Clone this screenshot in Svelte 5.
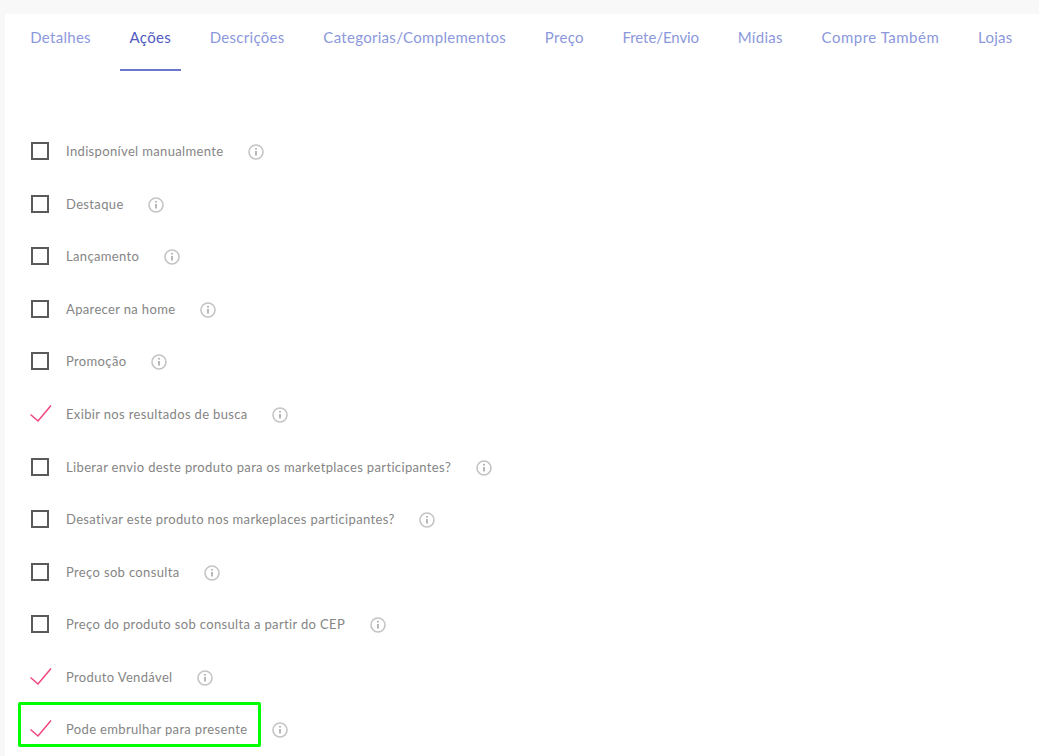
<script>
  const tabs = [
    { name: 'Detalhes' }, { name: 'Ações', active: true }, { name: 'Descrições' },
    { name: 'Categorias/Complementos' }, { name: 'Preço' }, { name: 'Frete/Envio', tight: true },
    { name: 'Mídias' }, { name: 'Compre Também', wide: true }, { name: 'Lojas' }
  ];
  const rows = [
    ['Indisponível manualmente',false],['Destaque',false],['Lançamento',false],['Aparecer na home',false],['Promoção',false],
    ['Exibir nos resultados de busca',true],['Liberar envio deste produto para os marketplaces participantes?',false],
    ['Desativar este produto nos markeplaces participantes?',false],['Preço sob consulta',false],
    ['Preço do produto sob consulta a partir do CEP',false],['Produto Vendável',true],['Pode embrulhar para presente',true]
  ];
</script>

<div class="page">
  <div class="card">
    <nav class="tabs">
      {#each tabs as t}
        <span class="tab" class:active={t.active} class:tight={t.tight} class:wide={t.wide}>{t.name}</span>
      {/each}
    </nav>
    <div class="list">
      {#each rows as [label, checked], i}
        <div class="row">
          <span class="box">
            {#if checked}
              <svg class="check" width="24" height="20" viewBox="0 0 24 20"><path d="M1.5 10.5 L9 17 L22 1.5" fill="none" stroke="#f0457f" stroke-width="1.5"/></svg>
            {:else}
              <span class="square"></span>
            {/if}
          </span>
          <span class="label">{label}</span>
          <svg class="info" width="16" height="16" viewBox="0 0 16 16">
            <circle cx="8" cy="8" r="7" fill="none" stroke="#c4c4c4" stroke-width="1.6"/>
            <circle cx="8" cy="4.8" r="1" fill="#b0b0b0"/>
            <path d="M8 7v4.6" stroke="#b0b0b0" stroke-width="1.8"/>
          </svg>
          {#if i === 11}<span class="mark"></span>{/if}
        </div>
      {/each}
    </div>
  </div>
</div>

<style>
  :global(body) { margin: 0; background: #f8f8f8; }
  .page { height: 756px; overflow: hidden; padding: 14px 0 0 5px; box-sizing: border-box; font-family: "Lato", "Open Sans", sans-serif; }
  .card { background: #fff; height: 800px; }
  .tabs { display: flex; gap: 18.7px; padding-left: 15.2px; height: 57px; }
  .tab { padding: 13px 10px 0; color: #8c98dc; font-size: 15px; line-height: 20px; letter-spacing: 0.3px; white-space: nowrap; box-sizing: border-box; height: 57px; }
  .tab.active { color: #4f5bc0; border-bottom: 2px solid #6b77cf; }
  .tab.tight { letter-spacing: -0.08px; }
  .tab.wide { letter-spacing: 0.5px; }
  .list { padding: 54px 0 0 26px; display: grid; grid-auto-rows: 52.55px; }
  .row { position: relative; display: flex; align-items: center; height: 52.55px; }
  .box { width: 35px; display: flex; align-items: center; }
  .square { width: 18px; height: 18px; box-sizing: border-box; border: 2px solid #5a5a5a; }
  .check { margin-left: -2px; }
  .label { color: #858585; font-size: 13px; letter-spacing: 0.35px; white-space: nowrap; margin-right: 24.5px; }
  .info { margin-top: 2px; }
  .mark { position: absolute; left: -13px; top: -1px; width: 243px; height: 45px; box-sizing: border-box; border: 3px solid #0f0; border-radius: 2px; }
</style>
